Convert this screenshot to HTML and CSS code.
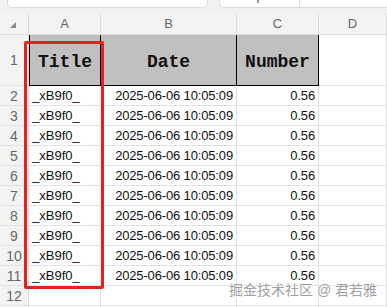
FILE: index.html
```html
<!DOCTYPE html>
<html lang="en">
<head>
<meta charset="UTF-8">
<title>Sheet</title>
<link rel="stylesheet" href="styles.css">
</head>
<body>
<div class="toolbar">
  <div class="namebox"></div>
  <div class="formula">
    <span class="tick"></span>
    <span class="divider"></span>
  </div>
</div>
<div class="sheet">
  <div class="corner"><span class="tri"></span></div>
  <div class="colhead">A</div>
  <div class="colhead">B</div>
  <div class="colhead">C</div>
  <div class="colhead">D</div>

  <div class="rowhead tall">1</div>
  <div class="hcell first">Title</div>
  <div class="hcell">Date</div>
  <div class="hcell">Number</div>
  <div class="cell tall"></div>

  <div class="rowhead">2</div><div class="cell">_xB9f0_</div><div class="cell num">2025-06-06 10:05:09</div><div class="cell num">0.56</div><div class="cell"></div>
  <div class="rowhead">3</div><div class="cell">_xB9f0_</div><div class="cell num">2025-06-06 10:05:09</div><div class="cell num">0.56</div><div class="cell"></div>
  <div class="rowhead">4</div><div class="cell">_xB9f0_</div><div class="cell num">2025-06-06 10:05:09</div><div class="cell num">0.56</div><div class="cell"></div>
  <div class="rowhead">5</div><div class="cell">_xB9f0_</div><div class="cell num">2025-06-06 10:05:09</div><div class="cell num">0.56</div><div class="cell"></div>
  <div class="rowhead">6</div><div class="cell">_xB9f0_</div><div class="cell num">2025-06-06 10:05:09</div><div class="cell num">0.56</div><div class="cell"></div>
  <div class="rowhead">7</div><div class="cell">_xB9f0_</div><div class="cell num">2025-06-06 10:05:09</div><div class="cell num">0.56</div><div class="cell"></div>
  <div class="rowhead">8</div><div class="cell">_xB9f0_</div><div class="cell num">2025-06-06 10:05:09</div><div class="cell num">0.56</div><div class="cell"></div>
  <div class="rowhead">9</div><div class="cell">_xB9f0_</div><div class="cell num">2025-06-06 10:05:09</div><div class="cell num">0.56</div><div class="cell"></div>
  <div class="rowhead">10</div><div class="cell">_xB9f0_</div><div class="cell num">2025-06-06 10:05:09</div><div class="cell num">0.56</div><div class="cell"></div>
  <div class="rowhead">11</div><div class="cell">_xB9f0_</div><div class="cell num">2025-06-06 10:05:09</div><div class="cell num">0.56</div><div class="cell"></div>
  <div class="rowhead">12</div><div class="cell"></div><div class="cell"></div><div class="cell"></div><div class="cell"></div>
  <div class="rowhead"></div><div class="cell"></div><div class="cell"></div><div class="cell"></div><div class="cell"></div>

  <div class="highlight"></div>
  <div class="watermark">掘金技术社区 @ 君若雅</div>
</div>
</body>
</html>
```

FILE: styles.css
```css
body {
  margin: 0;
  padding: 0;
  background-color: #f1f1f1;
  font-family: "Liberation Sans", "Noto Sans CJK SC", sans-serif;
  overflow: hidden;
}
.toolbar {
  display: flex;
  gap: 11px;
  height: 13px;
  padding-left: 7px;
}
.namebox,
.formula {
  height: 7px;
  background-color: #fff;
  border: 1px solid #dcdcdc;
  border-top: none;
  border-radius: 0 0 5px 5px;
}
.namebox {
  width: 199px;
}
.formula {
  flex: 1;
  position: relative;
  border-right: none;
  border-radius: 0 0 0 5px;
}
.formula .tick {
  position: absolute;
  left: 37px;
  top: 0;
  width: 2px;
  height: 3px;
  background-color: #999;
}
.formula .divider {
  position: absolute;
  left: 79px;
  top: 0;
  width: 1px;
  height: 7px;
  background-color: #ddd;
}
.sheet {
  position: relative;
  display: grid;
  grid-template-columns: 29px 72px 136px 82px 1fr;
  grid-template-rows: 22px 51px repeat(12, 20px);
  background-color: #fff;
}
.corner,
.colhead,
.rowhead {
  background-color: #f3f3f3;
  color: #666;
  font-size: 13px;
  display: flex;
  align-items: center;
  justify-content: center;
  box-sizing: border-box;
}
.corner {
  border-right: 1px solid #ddd;
  border-bottom: 1px solid #ddd;
  justify-content: flex-start;
  align-items: flex-end;
  padding: 0 0 6px 10px;
}
.tri {
  width: 0;
  height: 0;
  border-left: 6px solid transparent;
  border-bottom: 6px solid #8a8a8a;
}
.colhead {
  border-right: 1px solid #dedede;
  border-bottom: 1px solid #dedede;
}
.rowhead {
  border-right: 1px solid #dedede;
  border-bottom: 1px solid #e3e3e3;
  font-size: 14px;
}
.cell {
  box-sizing: border-box;
  border-right: 1px solid #e2e2e2;
  border-bottom: 1px solid #e2e2e2;
  font-size: 13px;
  color: #111;
  display: flex;
  align-items: center;
  padding: 0 3px;
  white-space: nowrap;
}
.cell.num {
  justify-content: flex-end;
  letter-spacing: -0.15px;
}
.hcell {
  box-sizing: border-box;
  background-color: #c0c0c0;
  border-right: 1px solid #000;
  border-bottom: 1px solid #000;
  font-family: "Liberation Mono", monospace;
  font-weight: bold;
  font-size: 18px;
  color: #111;
  display: flex;
  align-items: center;
  justify-content: center;
  padding-top: 3px;
}
.hcell.first {
  border-left: 1px solid #000;
}
.highlight {
  position: absolute;
  left: 24px;
  top: 28px;
  width: 80px;
  height: 248px;
  box-sizing: border-box;
  border: 3px solid #e5231d;
  border-radius: 2px;
}
.watermark {
  position: absolute;
  left: 229px;
  top: 266px;
  font-size: 14px;
  color: #a0a0a0;
  white-space: nowrap;
  text-shadow: 0 0 2px #fff, 0 0 1px #fff;
}
```
